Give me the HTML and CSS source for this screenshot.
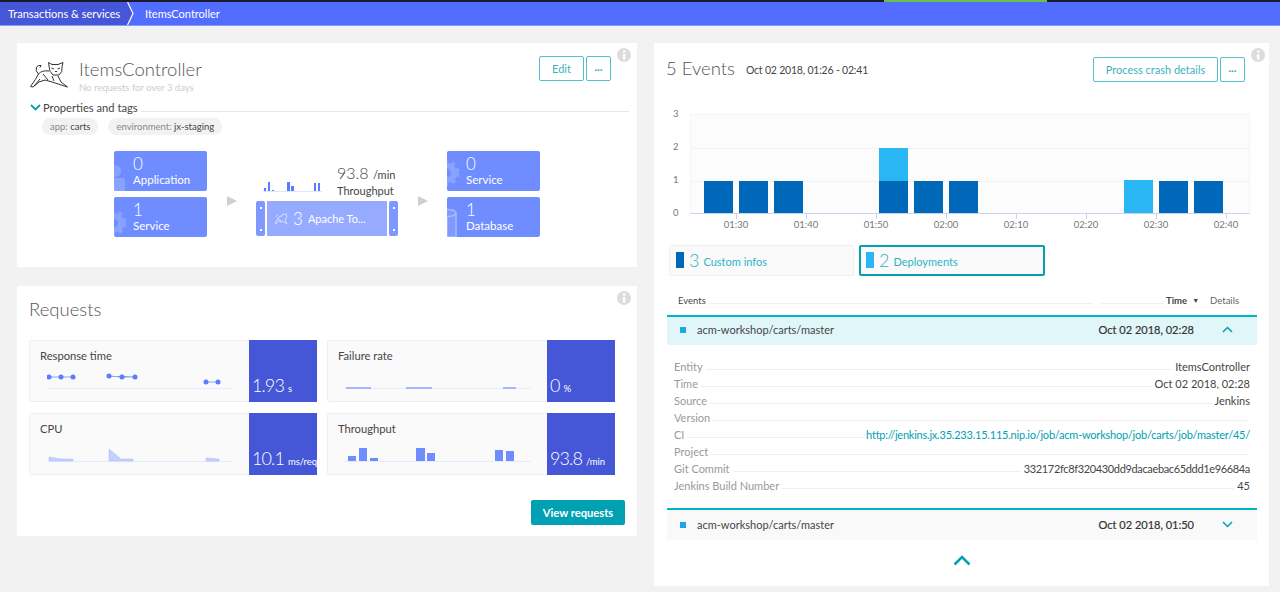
FILE: index.html
```html
<!DOCTYPE html>
<html lang="en">

<head>
  <meta charset="UTF-8">
  <title>ItemsController</title>
  <link rel="stylesheet" href="styles.css">
</head>

<body>
  <!-- barra superior -->
  <div class="topline"><span class="topline-green"></span></div>
  <nav class="crumbs">
    <a class="crumb-first">Transactions &amp; services</a>
    <svg class="crumb-sep" width="8" height="23" viewBox="0 0 8 23"><path d="M0 0 L5.5 11.5 L0 23 Z" fill="#4556d7"/><path d="M0.5 0 L6 11.5 L0.5 23" fill="none" stroke="#fff" stroke-width="1.2"/></svg>
    <a class="crumb-last">ItemsController</a>
  </nav>

  <main class="page">
    <div class="col-left">

      <!-- entidad -->
      <section class="card card-entity">
        <svg class="info" width="14" height="14" viewBox="0 0 14 14"><circle cx="7" cy="7" r="7" fill="#dcdcdc"/><rect x="6" y="6" width="2.4" height="5.5" fill="#fff"/><rect x="6" y="2.5" width="2.4" height="2.2" fill="#fff"/></svg>
        <div class="entity-head">
          <svg class="tomcat" width="38" height="26" viewBox="0 0 38 26" fill="none" stroke="#333" stroke-width="1">
            <path d="M19 4 L18.5 0.5 L22 2.5 L28 2.5 L33 0.5 L32 5 Q33 10 29 13 L23 13 Q19 10 19 4 Z"/>
            <path d="M21.5 6 L24 7 M30 6 L27.5 7 M25 9.5 L27 9.5"/>
            <path d="M19 9 Q12 8 8.5 12 Q6 17 0.5 24.5 L3 25 L9 20 L15 18 L22 20 L37.5 25 L31 20 L28 14"/>
            <path d="M8.5 12 Q5 9 6.5 5 Q8 3 11 3.5 L10 5.5"/>
            <path d="M13 12 L18 18 M10 17 L4 24 M22 14 L24 19"/>
          </svg>
          <div class="entity-titles">
            <h1 class="entity-name">ItemsController</h1>
            <p class="entity-sub">No requests for over 3 days</p>
          </div>
          <div class="actions">
            <button class="btn">Edit</button>
            <button class="btn btn-more">···</button>
          </div>
        </div>
        <div class="props">
          <svg width="11" height="7" viewBox="0 0 11 7" fill="none" stroke="#00a1b2" stroke-width="1.8"><path d="M1 1 L5.5 5.5 L10 1"/></svg>
          <span class="props-label">Properties and tags</span>
          <span class="props-line"></span>
        </div>
        <div class="tags">
          <span class="tag">app: <b>carts</b></span>
          <span class="tag">environment: <b>jx-staging</b></span>
        </div>

        <div class="flow">
          <div class="flow-col">
            <div class="tile">
              <svg class="tile-icon" width="14" height="40" viewBox="0 0 14 40" fill="#8aa2ff"><circle cx="1" cy="20" r="6"/><path d="M0 27 h8 q3 0 3 3 v10 h-11 Z"/></svg>
              <div class="tile-num">0</div>
              <div class="tile-label">Application</div>
            </div>
            <div class="tile">
              <svg class="tile-icon" width="14" height="40" viewBox="0 0 14 40" fill="none" stroke="#8aa2ff"><circle cx="0" cy="26" r="7" stroke-width="6"/><circle cx="0" cy="26" r="11" stroke-width="3" stroke-dasharray="4 4"/></svg>
              <div class="tile-num">1</div>
              <div class="tile-label">Service</div>
            </div>
          </div>
          <span class="arrow"></span>
          <div class="flow-mid">
            <div class="mid-top">
              <svg class="mid-spark" width="59" height="18" viewBox="0 0 59 18">
                <path d="M0 17.5 H59" stroke="#dfe5ff" stroke-width="1"/>
                <g fill="#5a7cff"><rect x="1" y="14" width="2" height="3"/><rect x="5" y="8" width="2" height="9"/><rect x="9" y="16" width="2" height="1"/><rect x="24" y="8" width="3" height="9"/><rect x="28" y="12" width="3" height="5"/><rect x="51" y="9" width="2" height="8"/><rect x="55" y="9" width="2" height="8"/></g>
              </svg>
              <div class="mid-stat">
                <div class="mid-value">93.8 <small>/min</small></div>
                <div class="mid-label">Throughput</div>
              </div>
            </div>
            <div class="proc">
              <div class="proc-side"><i></i><i></i></div>
              <div class="proc-main">
                <svg width="14" height="12" viewBox="0 0 14 12" fill="none" stroke="#d5deff" stroke-width="1"><path d="M8 3 L9 0.5 L10.5 2 L12 0.5 L13 4 L11 7 L13 11 L9 8.5 L6 7.5 L1 11 L4 5 Q6 2.5 8 3 Z M4 5 L7 10 M2 4 L3.5 1.5"/></svg>
                <span class="proc-num">3</span>
                <span class="proc-name">Apache To...</span>
              </div>
              <div class="proc-side"><i></i><i></i></div>
            </div>
          </div>
          <span class="arrow"></span>
          <div class="flow-col">
            <div class="tile">
              <svg class="tile-icon" width="14" height="40" viewBox="0 0 14 40" fill="none" stroke="#8aa2ff"><circle cx="0" cy="22" r="7" stroke-width="6"/><circle cx="0" cy="22" r="11" stroke-width="3" stroke-dasharray="4 4"/></svg>
              <div class="tile-num">0</div>
              <div class="tile-label">Service</div>
            </div>
            <div class="tile">
              <svg class="tile-icon" width="14" height="40" viewBox="0 0 14 40" fill="#7f99ff" stroke="#a8baff" stroke-width="1.5"><path d="M0 16 h0 V40 H9 V16"/><ellipse cx="1" cy="16" rx="8" ry="3.5"/></svg>
              <div class="tile-num">1</div>
              <div class="tile-label">Database</div>
            </div>
          </div>
        </div>
      </section>

      <!-- requests -->
      <section class="card card-requests">
        <svg class="info" width="14" height="14" viewBox="0 0 14 14"><circle cx="7" cy="7" r="7" fill="#dcdcdc"/><rect x="6" y="6" width="2.4" height="5.5" fill="#fff"/><rect x="6" y="2.5" width="2.4" height="2.2" fill="#fff"/></svg>
        <h2 class="title">Requests</h2>
        <div class="metrics">
          <div class="metric">
            <div class="metric-body">
              <div class="metric-name">Response time</div>
              <svg class="spark" width="186" height="27" viewBox="0 0 186 27">
                <path d="M0 26.5 H186" stroke="#e6eaff"/>
                <path d="M2 15 H26 M62 14 L74 15 H88 M159 20 H171" stroke="#8aa2ff"/>
                <g fill="#5a7cff"><circle cx="2" cy="15" r="2.5"/><circle cx="14" cy="15" r="2.5"/><circle cx="26" cy="15" r="2.5"/><circle cx="62" cy="14" r="2.5"/><circle cx="75" cy="15" r="2.5"/><circle cx="88" cy="15" r="2.5"/><circle cx="159" cy="20" r="2.5"/><circle cx="171" cy="20" r="2.5"/></g>
              </svg>
            </div>
            <div class="metric-value">1.93<small>s</small></div>
          </div>
          <div class="metric">
            <div class="metric-body">
              <div class="metric-name">Failure rate</div>
              <svg class="spark" width="186" height="27" viewBox="0 0 186 27">
                <path d="M0 26.5 H186" stroke="#e6eaff"/>
                <path d="M1 26 H26 M61 26 H87 M158 26 H171" stroke="#a5b8ff" stroke-width="2"/>
              </svg>
            </div>
            <div class="metric-value">0<small>%</small></div>
          </div>
          <div class="metric">
            <div class="metric-body">
              <div class="metric-name">CPU</div>
              <svg class="spark" width="186" height="27" viewBox="0 0 186 27">
                <path d="M0 26.5 H186" stroke="#e6eaff"/>
                <path d="M2 22 L14 24 H26 V26 H2 Z M62 14 L74 24 H86 V26 H62 Z M159 23 L172 24 V26 H159 Z" fill="#c4d0ff" stroke="#a5b8ff" stroke-width="0.5"/>
              </svg>
            </div>
            <div class="metric-value">10.1<small>ms/req</small></div>
          </div>
          <div class="metric">
            <div class="metric-body">
              <div class="metric-name">Throughput</div>
              <svg class="spark" width="186" height="27" viewBox="0 0 186 27">
                <g fill="#6f8dff"><rect x="3" y="21" width="8" height="5"/><rect x="14" y="13" width="8" height="13"/><rect x="25" y="23" width="8" height="3"/><rect x="71" y="13" width="9" height="13"/><rect x="82" y="18" width="8" height="8"/><rect x="150" y="15" width="8" height="11"/><rect x="161" y="16" width="8" height="10"/></g>
                <path d="M0 26.5 H186" stroke="#e6eaff"/>
              </svg>
            </div>
            <div class="metric-value">93.8<small>/min</small></div>
          </div>
        </div>
        <div class="req-foot"><button class="btn-solid">View requests</button></div>
      </section>
    </div>

    <!-- eventos -->
    <section class="card card-events">
      <svg class="info" width="14" height="14" viewBox="0 0 14 14"><circle cx="7" cy="7" r="7" fill="#dcdcdc"/><rect x="6" y="6" width="2.4" height="5.5" fill="#fff"/><rect x="6" y="2.5" width="2.4" height="2.2" fill="#fff"/></svg>
      <div class="events-head">
        <h2 class="title">5 Events</h2>
        <span class="events-range">Oct 02 2018, 01:26 - 02:41</span>
        <div class="actions">
          <button class="btn btn-wide">Process crash details</button>
          <button class="btn btn-more">···</button>
        </div>
      </div>

      <div class="chart">
        <div class="y-axis"><span>3</span><span>2</span><span>1</span><span>0</span></div>
        <div class="chart-right">
          <div class="plot">
            <div class="bar-group"><i class="dark"></i></div>
            <div class="bar-group"><i class="dark"></i></div>
            <div class="bar-group"><i class="dark"></i></div>
            <div class="bar-group"></div>
            <div class="bar-group"></div>
            <div class="bar-group"><i class="light"></i><i class="dark"></i></div>
            <div class="bar-group"><i class="dark"></i></div>
            <div class="bar-group"><i class="dark"></i></div>
            <div class="bar-group"></div>
            <div class="bar-group"></div>
            <div class="bar-group"></div>
            <div class="bar-group"></div>
            <div class="bar-group"><i class="light"></i></div>
            <div class="bar-group"><i class="dark"></i></div>
            <div class="bar-group"><i class="dark"></i></div>
          </div>
          <div class="x-axis"><span>01:30</span><span>01:40</span><span>01:50</span><span>02:00</span><span>02:10</span><span>02:20</span><span>02:30</span><span>02:40</span></div>
        </div>
      </div>

      <div class="filters">
        <div class="filter"><i class="swatch dark"></i><span class="filter-num">3</span><span class="filter-label">Custom infos</span></div>
        <div class="filter filter-on"><i class="swatch light"></i><span class="filter-num">2</span><span class="filter-label">Deployments</span></div>
      </div>

      <div class="table-head">
        <span>Events</span>
        <span class="dots grow"></span>
        <span class="dots time-line"></span>
        <b>Time</b><span class="sort">▼</span>
        <span class="col-details">Details</span>
      </div>

      <div class="event event-open">
        <i class="event-mark"></i>
        <span class="event-name">acm-workshop/carts/master</span>
        <span class="event-time">Oct 02 2018, 02:28</span>
        <svg width="11" height="7" viewBox="0 0 11 7" fill="none" stroke="#00a1b2" stroke-width="1.5"><path d="M1 6 L5.5 1.5 L10 6"/></svg>
      </div>
      <dl class="details">
        <div class="row"><dt>Entity</dt><span class="dots"></span><dd>ItemsController</dd></div>
        <div class="row"><dt>Time</dt><span class="dots"></span><dd>Oct 02 2018, 02:28</dd></div>
        <div class="row"><dt>Source</dt><span class="dots"></span><dd>Jenkins</dd></div>
        <div class="row"><dt>Version</dt><span class="dots"></span><dd></dd></div>
        <div class="row"><dt>CI</dt><span class="dots"></span><dd><a>http://jenkins.jx.35.233.15.115.nip.io/job/acm-workshop/job/carts/job/master/45/</a></dd></div>
        <div class="row"><dt>Project</dt><span class="dots"></span><dd></dd></div>
        <div class="row"><dt>Git Commit</dt><span class="dots"></span><dd class="commit">332172fc8f320430dd9dacaebac65ddd1e96684a</dd></div>
        <div class="row"><dt>Jenkins Build Number</dt><span class="dots"></span><dd>45</dd></div>
      </dl>
      <div class="event">
        <i class="event-mark"></i>
        <span class="event-name">acm-workshop/carts/master</span>
        <span class="event-time">Oct 02 2018, 01:50</span>
        <svg width="11" height="7" viewBox="0 0 11 7" fill="none" stroke="#00a1b2" stroke-width="1.5"><path d="M1 1 L5.5 5.5 L10 1"/></svg>
      </div>
      <div class="collapse">
        <svg width="18" height="11" viewBox="0 0 18 11" fill="none" stroke="#00a1b2" stroke-width="2.5"><path d="M1.5 9.5 L9 2 L16.5 9.5"/></svg>
      </div>
    </section>
  </main>
</body>

</html>
```

FILE: styles.css
```css
* {
  box-sizing: border-box;
}

body {
  margin: 0;
  background-color: #f2f2f2;
  font-family: Lato, "Open Sans", sans-serif;
  color: #454646;
  height: 592px;
  overflow: hidden;
}

/* barra superior */
.topline {
  height: 2px;
  background-color: #1a1a2e;
  display: flex;
  padding-left: 884px;
}

.topline-green {
  width: 163px;
  background-color: #6bbf4a;
}

.crumbs {
  height: 24px;
  background-color: #526cff;
  border-bottom: 1px solid #8b9cff;
  display: flex;
  align-items: flex-start;
  color: #fff;
  font-size: 11px;
}

.crumb-first {
  background-color: #4556d7;
  height: 23px;
  line-height: 23px;
  padding-left: 8px;
  width: 127px;
  white-space: nowrap;
}

.crumb-last {
  margin-left: 10px;
  line-height: 23px;
}

/* layout general */
.page {
  display: grid;
  grid-template-columns: 620px 615px;
  column-gap: 17px;
  padding: 17px 0 0 17px;
  align-items: start;
}

.col-left {
  display: flex;
  flex-direction: column;
  gap: 19px;
}

.card {
  background-color: #fff;
  position: relative;
}

.info {
  position: absolute;
  top: 5px;
  right: 6px;
}

.card-events .info {
  right: 4px;
}

.card-entity {
  height: 224px;
  padding: 13px 8px 0 12px;
}

.card-requests {
  height: 250px;
  padding: 10px 12px 0 12px;
}

.card-events {
  height: 543px;
  padding: 10px 10px 0 12px;
}

/* cabecera entidad */
.entity-head {
  display: flex;
  align-items: flex-start;
  height: 41px;
}

.tomcat {
  margin: 6px 0 0 1px;
}

.entity-titles {
  margin-left: 11px;
  flex: 1;
}

.entity-name {
  font-size: 18.5px;
  font-weight: 300;
  line-height: 26px;
  margin: 0;
  color: #555;
}

.entity-sub {
  font-size: 9.5px;
  line-height: 11px;
  margin: 0;
  color: #ccc;
}

.actions {
  display: flex;
  gap: 2px;
  margin-right: 18px;
}

.btn {
  height: 25px;
  padding: 0 10px;
  border: 1px solid #52bfcd;
  border-radius: 2px;
  background-color: #fff;
  color: #3eb1c0;
  font-family: inherit;
  font-size: 11px;
  white-space: nowrap;
  cursor: pointer;
  margin: 0;
}

.card-entity .btn {
  width: 45px;
}

.card-entity .btn.btn-more,
.btn-more {
  width: 25px;
  padding: 0;
  font-size: 10px;
  font-weight: 700;
}

.btn-wide {
  width: 125px;
  padding: 0;
}

.props {
  display: flex;
  align-items: center;
  margin: 3px 0 0 1px;
  height: 14px;
}

.props-label {
  font-size: 11.2px;
  margin-left: 2px;
}

.props-line {
  flex: 1;
  border-bottom: 1px solid #e6e6e6;
  margin: 8px 0 0 3px;
}

.tags {
  display: flex;
  gap: 10px;
  margin: 4px 0 0 13px;
}

.tag {
  background-color: #f2f2f2;
  border-radius: 9px;
  height: 17px;
  line-height: 17px;
  padding: 0 8px;
  font-size: 9.5px;
  color: #888;
}

.tag b {
  font-weight: 400;
  color: #454646;
}

/* flujo */
.flow {
  display: flex;
  margin: 16px 0 0 85px;
}

.flow-col {
  display: flex;
  flex-direction: column;
  gap: 6px;
  width: 93px;
}

.tile {
  height: 40px;
  background-color: #6f8dff;
  border-radius: 2px;
  position: relative;
  overflow: hidden;
  color: #fff;
  padding-left: 19px;
}

.tile-icon {
  position: absolute;
  left: 0;
  top: 0;
}

.tile-num {
  font-size: 17px;
  font-weight: 300;
  line-height: 18px;
  margin-top: 4px;
}

.tile-label {
  font-size: 11.5px;
  line-height: 13px;
}

.arrow {
  width: 0;
  height: 0;
  border-left: 10px solid #cfcfcf;
  border-top: 5px solid transparent;
  border-bottom: 5px solid transparent;
  margin: 45px 19px 0 20px;
  align-self: flex-start;
}

.flow-mid {
  width: 142px;
  display: flex;
  flex-direction: column;
}

.mid-top {
  display: flex;
  align-items: flex-start;
  margin-left: 7px;
  height: 50px;
}

.mid-spark {
  margin-top: 23px;
  flex: none;
}

.mid-stat {
  margin: 13px 0 0 15px;
  white-space: nowrap;
}

.mid-value {
  font-size: 16px;
  font-weight: 300;
  line-height: 18px;
}

.mid-value small {
  font-size: 11px;
  font-weight: 400;
}

.mid-label {
  font-size: 11px;
  line-height: 14px;
  margin-top: 0;
}

.proc {
  display: flex;
  gap: 2px;
  height: 35px;
  width: 142px;
}

.proc-side {
  width: 9px;
  background-color: #7e98ff;
  border-radius: 2px;
  display: flex;
  flex-direction: column;
  justify-content: space-between;
  align-items: center;
  padding: 6px 0 5px;
}

.proc-side i {
  width: 2px;
  height: 2px;
  background-color: #fff;
}

.proc-main {
  flex: 1;
  background-color: #96abff;
  display: flex;
  align-items: center;
  color: #fff;
  padding-left: 7px;
  gap: 5px;
}

.proc-num {
  font-size: 17px;
  font-weight: 300;
}

.proc-name {
  font-size: 11px;
  white-space: nowrap;
}

/* requests */
.title {
  font-size: 18.5px;
  font-weight: 300;
  margin: 2px 0 0;
  line-height: 26px;
  color: #555;
}

.card-requests .title {
  margin-top: 0;
}

.metrics {
  display: grid;
  grid-template-columns: 288px 288px;
  column-gap: 10px;
  row-gap: 11px;
  margin-top: 18px;
}

.metric {
  height: 62px;
  display: flex;
  border: 1px solid #efefef;
  background-color: #fafafa;
  border-radius: 2px;
}

.metric-body {
  flex: 1;
  padding: 7px 0 0 10px;
}

.metric-name {
  font-size: 11.2px;
  line-height: 15px;
}

.spark {
  display: block;
  margin: -1px 0 0 7px;
}

.metric-value {
  width: 68px;
  margin: -1px -1px -1px 0;
  background-color: #4556d7;
  color: #fff;
  font-size: 18px;
  letter-spacing: -0.9px;
  font-weight: 300;
  padding: 33px 0 0 3px;
  line-height: 24px;
  white-space: nowrap;
}

.metric-value small {
  font-size: 9.5px;
  font-weight: 400;
  letter-spacing: -0.1px;
  margin-left: 4px;
}

.req-foot {
  display: flex;
  justify-content: flex-end;
  margin-top: 25px;
}

.btn-solid {
  width: 94px;
  height: 25px;
  background-color: #00a1b2;
  color: #fff;
  border: 0;
  border-radius: 2px;
  font-family: inherit;
  font-size: 11.2px;
  font-weight: 700;
  cursor: pointer;
}

/* eventos */
.events-head {
  display: flex;
  align-items: flex-start;
  height: 30px;
}

.events-range {
  font-size: 10.5px;
  letter-spacing: -0.2px;
  margin: 11px 0 0 11px;
  flex: 1;
}

.card-events .actions {
  margin-top: 4px;
  margin-right: 14px;
}

.chart {
  display: flex;
  margin-top: 31px;
  margin-left: 7px;
}

.y-axis {
  width: 17px;
  height: 110px;
  margin-top: -6px;
  flex: none;
  display: flex;
  flex-direction: column;
  justify-content: space-between;
  font-size: 9.5px;
  line-height: 11px;
  color: #777;
}

.y-axis span {
  height: 11px;
}

.chart-right {
  width: 560px;
}

.plot {
  height: 100px;
  background-color: #fcfcfc;
  border: 1px solid #f4f4f4;
  border-bottom: 1px solid #c6d3f5;
  display: grid;
  grid-template-columns: repeat(15, 35px);
  padding-left: 13px;
  background-image:
    linear-gradient(#f2f2f2, #f2f2f2),
    linear-gradient(#f2f2f2, #f2f2f2);
  background-size: 100% 1px, 100% 1px;
  background-position: 0 33px, 0 66px;
  background-repeat: no-repeat;
}

.bar-group {
  display: flex;
  flex-direction: column;
  justify-content: flex-end;
  width: 29px;
}

.bar-group i {
  display: block;
}

.bar-group i.dark {
  height: 32px;
}

.bar-group i.light {
  height: 33px;
}

i.dark {
  background-color: #0068b8;
}

i.light {
  background-color: #2ab6f4;
}

.x-axis {
  display: flex;
  padding-left: 11px;
  font-size: 9.5px;
  color: #777;
  line-height: 12px;
  margin-top: 5px;
}

.x-axis span {
  width: 70px;
  text-align: center;
  flex: none;
  position: relative;
}

.x-axis span::before {
  content: "";
  position: absolute;
  left: 35px;
  top: -5px;
  width: 1px;
  height: 5px;
  background-color: #c6d3f5;
}

.filters {
  display: flex;
  gap: 5px;
  margin-top: 14px;
  margin-left: 3px;
}

.filter {
  width: 185px;
  height: 31px;
  background-color: #fafafa;
  border: 1px solid #efefef;
  border-radius: 2px;
  display: flex;
  align-items: center;
  padding: 0 0 1px 6px;
  color: #2ab4c8;
}

.filter-on {
  border: 2px solid #00a1b2;
  width: 186px;
  padding-left: 5px;
}

.swatch {
  width: 8px;
  height: 16px;
  display: block;
}

.filter-num {
  font-size: 18px;
  font-weight: 300;
  margin-left: 5px;
}

.filter-label {
  font-size: 11px;
  margin-left: 4px;
  margin-top: 2px;
}

.table-head {
  display: flex;
  align-items: center;
  font-size: 9.5px;
  margin: 18px 0 0 12px;
  width: 562px;
  height: 12px;
}

.table-head b {
  font-weight: 700;
}

.dots {
  border-bottom: 1px solid #efefef;
  flex: 1;
  margin: 6px 3px 0;
}

.time-line {
  flex: none;
  width: 62px;
  margin-left: 5px;
}

.sort {
  font-size: 7px;
  margin-left: 5px;
}

.col-details {
  color: #666;
  margin-left: 11px;
  margin-right: 1px;
}

.event {
  display: flex;
  align-items: center;
  width: 590px;
  height: 32px;
  margin-left: 1px;
  background-color: #f9f9f9;
  border-top: 2px solid #00b4c8;
  font-size: 11px;
  padding: 0 0 1px 13px;
}

.event-open {
  height: 30px;
  background-color: #e0f6f9;
  margin-top: 9px;
  padding-bottom: 3px;
  border-radius: 0 0 2px 2px;
}

.event-mark {
  width: 6px;
  height: 6px;
  background-color: #1da7ea;
  margin-right: 11px;
}

.event-name {
  flex: 1;
}

.event-time {
  color: #333;
  margin-right: 28px;
  -webkit-text-stroke: 0.2px #333;
}

.event svg {
  margin-right: 24px;
}

.details {
  margin: 13px 0 14px 1px;
  padding: 0 7px;
  width: 590px;
  height: 136px;
}

.row {
  display: flex;
  align-items: center;
  height: 17px;
  font-size: 11px;
  white-space: nowrap;
}

.row dt {
  color: #999;
}

.row dd {
  margin: 0;
}

.row a {
  color: #00a1b2;
  letter-spacing: -0.22px;
}

.row .commit {
  letter-spacing: -0.35px;
}

.collapse {
  display: flex;
  justify-content: center;
  width: 590px;
  margin: 15px 0 0 1px;
}
```
